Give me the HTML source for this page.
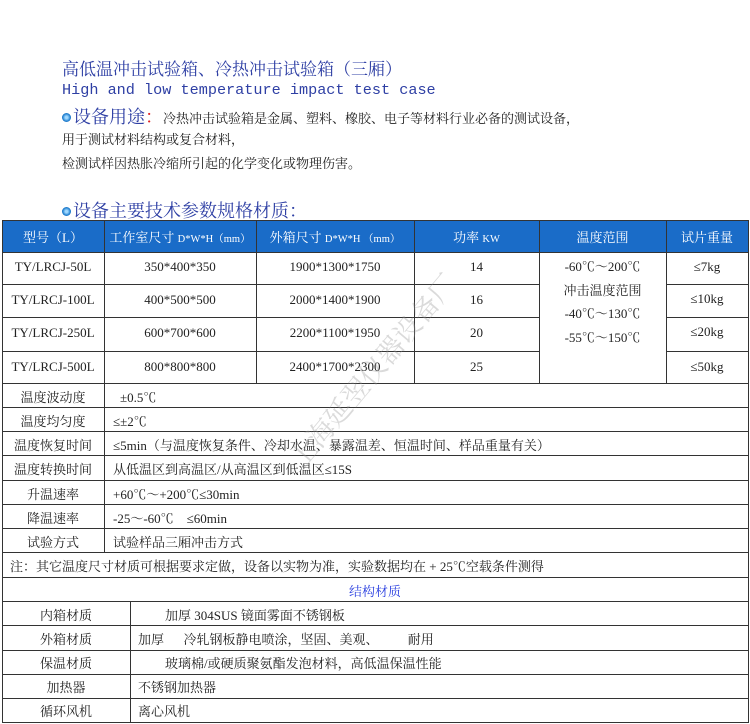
<!DOCTYPE html>
<html><head><meta charset="utf-8"><style>
body{margin:0;width:750px;height:724px;background:#fff;position:relative;overflow:hidden;font-family:"Liberation Serif","Noto Serif CJK SC",serif;color:#222}
.a{position:absolute;white-space:nowrap}
.h{position:absolute;background:#333}
.v{position:absolute;background:#333;width:1px}
.hl{height:1px}
.c{position:absolute;text-align:center;font-size:13px;white-space:nowrap}
.sm{font-size:10.5px}
.ic{display:inline-block;width:9px;height:9px;border-radius:50%;background:radial-gradient(circle,#9fd8ff 20%,#1f7fd0 60%,#1a4f9a);margin-right:2px;vertical-align:1px}
</style></head><body>
<div class="a" style="left:62px;top:55px;font-size:17px;color:#2e3fa4">高低温冲击试验箱、冷热冲击试验箱（三厢）</div>
<div class="a" style="left:62px;top:81px;font-size:15.2px;color:#2e3fa4;font-family:'Liberation Mono',monospace">High and low temperature impact test case</div>
<div class="a" style="left:62px;top:103px;font-size:18px;color:#2e3fa4"><span class="ic"></span>设备用途<span style="color:#e02020">：</span><span style="font-size:13px;color:#222;margin-left:0px">冷热冲击试验箱是金属、塑料、橡胶、电子等材料行业必备的测试设备，</span></div>
<div class="a" style="left:62px;top:129px;font-size:13px">用于测试材料结构或复合材料，</div>
<div class="a" style="left:62px;top:153px;font-size:13px">检测试样因热胀冷缩所引起的化学变化或物理伤害。</div>
<div class="a" style="left:62px;top:197px;font-size:18px;color:#2e3fa4"><span class="ic"></span>设备主要技术参数规格材质：</div>

<div style="position:absolute;left:2px;top:220px;width:746px;height:32px;background:#1a6cc8"></div>
<div class="c" style="left:2px;width:102px;top:227px;color:#fff">型号（L）</div>
<div class="c" style="left:104px;width:152px;top:227px;color:#fff">工作室尺寸 <span class="sm">D*W*H（mm）</span></div>
<div class="c" style="left:256px;width:158px;top:227px;color:#fff">外箱尺寸 <span class="sm">D*W*H （mm）</span></div>
<div class="c" style="left:414px;width:125px;top:227px;color:#fff">功率 <span class="sm">KW</span></div>
<div class="c" style="left:539px;width:127px;top:227px;color:#fff">温度范围</div>
<div class="c" style="left:666px;width:82px;top:227px;color:#fff">试片重量</div>

<div class="c" style="left:2px;width:102px;top:259px">TY/LRCJ-50L</div>
<div class="c" style="left:2px;width:102px;top:292px">TY/LRCJ-100L</div>
<div class="c" style="left:2px;width:102px;top:325px">TY/LRCJ-250L</div>
<div class="c" style="left:2px;width:102px;top:359px">TY/LRCJ-500L</div>
<div class="c" style="left:104px;width:152px;top:259px">350*400*350</div>
<div class="c" style="left:104px;width:152px;top:292px">400*500*500</div>
<div class="c" style="left:104px;width:152px;top:325px">600*700*600</div>
<div class="c" style="left:104px;width:152px;top:359px">800*800*800</div>
<div class="c" style="left:256px;width:158px;top:259px">1900*1300*1750</div>
<div class="c" style="left:256px;width:158px;top:292px">2000*1400*1900</div>
<div class="c" style="left:256px;width:158px;top:325px">2200*1100*1950</div>
<div class="c" style="left:256px;width:158px;top:359px">2400*1700*2300</div>
<div class="c" style="left:414px;width:125px;top:259px">14</div>
<div class="c" style="left:414px;width:125px;top:292px">16</div>
<div class="c" style="left:414px;width:125px;top:325px">20</div>
<div class="c" style="left:414px;width:125px;top:359px">25</div>
<div class="c" style="left:539px;width:127px;top:255px;line-height:23.5px">-60℃～200℃<br>冲击温度范围<br>-40℃～130℃<br>-55℃～150℃</div>
<div class="c" style="left:666px;width:82px;top:259px">≤7kg</div>
<div class="c" style="left:666px;width:82px;top:291px">≤10kg</div>
<div class="c" style="left:666px;width:82px;top:324px">≤20kg</div>
<div class="c" style="left:666px;width:82px;top:359px">≤50kg</div>

<div class="h hl" style="left:2px;top:220px;width:746px"></div>
<div class="h hl" style="left:2px;top:252px;width:746px"></div>
<div class="h hl" style="left:2px;top:284px;width:537px"></div>
<div class="h hl" style="left:666px;top:284px;width:82px"></div>
<div class="h hl" style="left:2px;top:317px;width:537px"></div>
<div class="h hl" style="left:666px;top:317px;width:82px"></div>
<div class="h hl" style="left:2px;top:351px;width:537px"></div>
<div class="h hl" style="left:666px;top:351px;width:82px"></div>
<div class="v" style="left:104px;top:220px;height:164px"></div>
<div class="v" style="left:256px;top:220px;height:164px"></div>
<div class="v" style="left:414px;top:220px;height:164px"></div>
<div class="v" style="left:539px;top:220px;height:164px"></div>
<div class="v" style="left:666px;top:220px;height:164px"></div>

<div class="h hl" style="left:2px;top:383px;width:746px"></div>
<div class="h hl" style="left:2px;top:407px;width:746px"></div>
<div class="h hl" style="left:2px;top:431px;width:746px"></div>
<div class="h hl" style="left:2px;top:455px;width:746px"></div>
<div class="h hl" style="left:2px;top:480px;width:746px"></div>
<div class="h hl" style="left:2px;top:504px;width:746px"></div>
<div class="h hl" style="left:2px;top:528px;width:746px"></div>
<div class="h hl" style="left:2px;top:552px;width:746px"></div>
<div class="h hl" style="left:2px;top:577px;width:746px"></div>
<div class="h hl" style="left:2px;top:601px;width:746px"></div>
<div class="h hl" style="left:2px;top:625px;width:746px"></div>
<div class="h hl" style="left:2px;top:650px;width:746px"></div>
<div class="h hl" style="left:2px;top:674px;width:746px"></div>
<div class="h hl" style="left:2px;top:698px;width:746px"></div>
<div class="h hl" style="left:2px;top:722px;width:746px"></div>
<div class="v" style="left:2px;top:220px;height:503px"></div>
<div class="v" style="left:748px;top:220px;height:503px"></div>
<div class="v" style="left:104px;top:383px;height:169px"></div>
<div class="v" style="left:130px;top:601px;height:122px"></div>

<div class="c" style="left:2px;width:102px;top:387px">温度波动度</div>
<div class="c" style="left:2px;width:102px;top:411px">温度均匀度</div>
<div class="c" style="left:2px;width:102px;top:435px">温度恢复时间</div>
<div class="c" style="left:2px;width:102px;top:459px">温度转换时间</div>
<div class="c" style="left:2px;width:102px;top:484px">升温速率</div>
<div class="c" style="left:2px;width:102px;top:508px">降温速率</div>
<div class="c" style="left:2px;width:102px;top:532px">试验方式</div>
<div class="a" style="left:120px;top:387px;font-size:13px">±0.5℃</div>
<div class="a" style="left:113px;top:411px;font-size:13px">≤±2℃</div>
<div class="a" style="left:113px;top:435px;font-size:13px">≤5min（与温度恢复条件、冷却水温、暴露温差、恒温时间、样品重量有关）</div>
<div class="a" style="left:113px;top:459px;font-size:13px">从低温区到高温区/从高温区到低温区≤15S</div>
<div class="a" style="left:113px;top:484px;font-size:13px">+60℃～+200℃≤30min</div>
<div class="a" style="left:113px;top:508px;font-size:13px">-25～-60℃&nbsp;&nbsp;&nbsp;&nbsp;≤60min</div>
<div class="a" style="left:113px;top:532px;font-size:13px">试验样品三厢冲击方式</div>
<div class="a" style="left:10px;top:556px;font-size:13px">注：其它温度尺寸材质可根据要求定做，设备以实物为准，实验数据均在 + 25℃空载条件测得</div>
<div class="c" style="left:2px;width:746px;top:581px;color:#2a3fe0">结构材质</div>
<div class="c" style="left:2px;width:128px;top:605px">内箱材质</div>
<div class="c" style="left:2px;width:128px;top:629px">外箱材质</div>
<div class="c" style="left:2px;width:128px;top:653px">保温材质</div>
<div class="c" style="left:2px;width:128px;top:677px">加热器</div>
<div class="c" style="left:2px;width:128px;top:701px">循环风机</div>
<div class="a" style="left:165px;top:605px;font-size:13px">加厚 304SUS 镜面雾面不锈钢板</div>
<div class="a" style="left:138px;top:629px;font-size:13px">加厚&nbsp;&nbsp;&nbsp;&nbsp;&nbsp;&nbsp;冷轧钢板静电喷涂，坚固、美观、&nbsp;&nbsp;&nbsp;&nbsp;&nbsp;&nbsp;&nbsp;&nbsp;&nbsp;耐用</div>
<div class="a" style="left:165px;top:653px;font-size:13px">玻璃棉/或硬质聚氨酯发泡材料，高低温保温性能</div>
<div class="a" style="left:138px;top:677px;font-size:13px">不锈钢加热器</div>
<div class="a" style="left:138px;top:701px;font-size:13px">离心风机</div>

<div class="a" style="left:250px;top:350px;font-size:27px;color:rgba(150,150,150,0.35);transform:rotate(-50deg);transform-origin:center">上海延翌仪器设备厂</div>
</body></html>
